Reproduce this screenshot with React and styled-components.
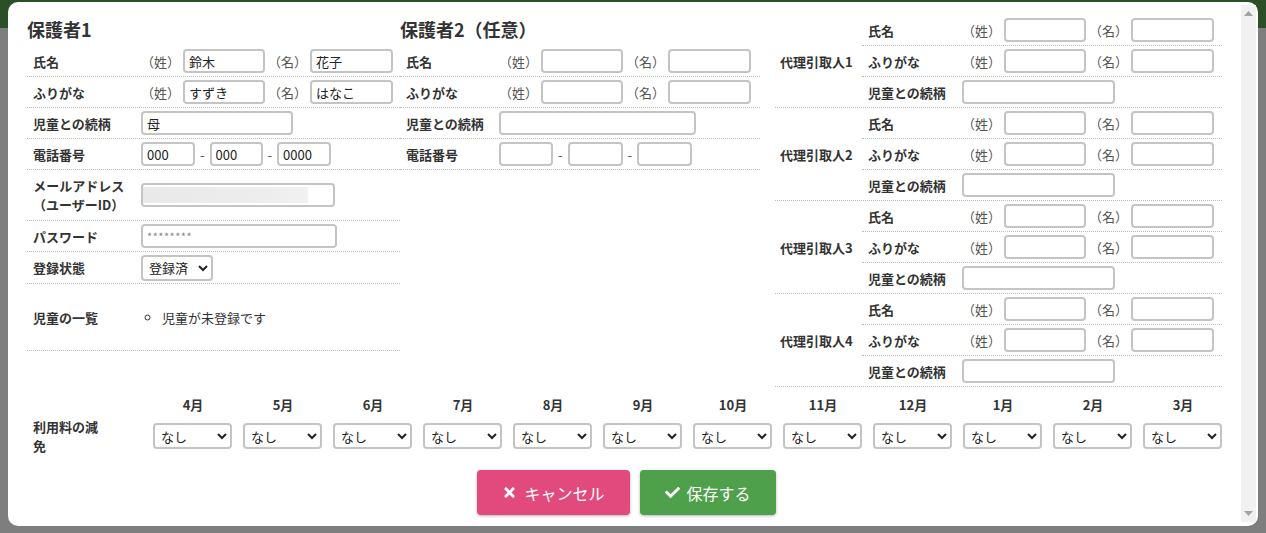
import styled, { createGlobalStyle } from "styled-components";
import { FaTimes, FaCheck } from "react-icons/fa";

const GlobalStyle = createGlobalStyle`
  html, body {
    margin: 0;
    height: 100%;
  }
  body {
    background: #7e7e7e;
    font-family: "Noto Sans CJK JP", "Noto Sans", sans-serif;
    font-size: 13px;
    color: #333;
  }
`;

const TopBar = styled.div`
  height: 28px;
  background: #2b4f27;
`;

const Modal = styled.div`
  position: fixed;
  top: 2px;
  left: 8px;
  width: 1250px;
  height: 524px;
  box-sizing: border-box;
  padding: 3px 2px 4px 0;
  background: #fff;
  border-radius: 10px;
  display: flex;
`;

const Body = styled.div`
  flex: 1;
  overflow: hidden;
  padding: 10px 15px 0 19px;
`;

const ScrollTrack = styled.div`
  width: 15px;
  flex-shrink: 0;
  background: #f1f1f1;
  display: flex;
  flex-direction: column;
  justify-content: space-between;
  align-items: center;
  padding: 6px 0;
  box-sizing: border-box;
`;

const Columns = styled.div`
  display: flex;
  align-items: flex-start;
`;

const Column = styled.div`
  width: ${({ $w }) => $w}px;
  margin-left: ${({ $ml }) => $ml || 0}px;
  flex-shrink: 0;
`;

const Heading = styled.h3`
  margin: 2px 0 5px;
  font-size: 18px;
  line-height: 24px;
  font-weight: bold;
  color: #333;
`;

const Row = styled.div`
  display: grid;
  grid-template-columns: ${({ $lw }) => $lw}px 1fr;
  align-items: center;
  min-height: ${({ $h }) => $h || 30}px;
  border-bottom: 1px dotted #bdbdbd;
`;

const Label = styled.div`
  padding-left: 6px;
  font-weight: bold;
  line-height: 19px;
  white-space: nowrap;
`;

const StackedLabel = styled(Label)`
  justify-self: start;
  text-align: center;
`;

const Value = styled.div`
  display: flex;
  align-items: center;
  gap: 3px;
`;

const Tag = styled.span`
  color: #555;
  white-space: nowrap;
`;

const Input = styled.input`
  box-sizing: border-box;
  width: ${({ $w }) => $w}px;
  height: 24px;
  border: 2px solid #c4c4c4;
  border-radius: 4px;
  padding: 0 4px;
  font: inherit;
  font-size: 13px;
  color: #222;
  background: #fff;
  outline: none;
`;

const MaskedInput = styled(Input)`
  background: linear-gradient(
      to right,
      #e9e9e9 0,
      #ececec 55%,
      #f1f1f1 calc(100% - 26px),
      #fff calc(100% - 24px)
    )
    content-box;
  padding: 2px 0;
`;

const PasswordInput = styled(Input)`
  font-size: 11px;
  letter-spacing: 0.5px;
  &::placeholder {
    color: #888;
  }
`;

const Dash = styled.span`
  color: #555;
  padding: 0 5px;
`;

const Select = styled.select`
  box-sizing: border-box;
  width: ${({ $w }) => $w}px;
  height: 26px;
  border: 2px solid #c4c4c4;
  border-radius: 4px;
  background: #fff;
  font: inherit;
  font-size: 13px;
  color: #222;
  padding: 0 2px;
`;

const ChildList = styled.ul`
  margin: 0;
  padding-left: 21px;
  list-style: circle;
  line-height: 19px;
`;

const Group = styled.div`
  display: grid;
  grid-template-columns: 87px 1fr;
  align-items: center;
  border-bottom: 1px dotted #bdbdbd;
`;

const GroupLabel = styled.div`
  grid-row: 1 / span 3;
  padding-left: 5px;
  font-weight: bold;
  white-space: nowrap;
`;

const SubRow = styled.div`
  display: grid;
  grid-template-columns: 100px 1fr;
  align-items: center;
  height: ${({ $last }) => ($last ? "30px" : "31px")};
  box-sizing: border-box;
  border-bottom: ${({ $last }) => ($last ? "none" : "1px dotted #bdbdbd")};
`;

const FeeTable = styled.div`
  margin-top: 4px;
  display: grid;
  grid-template-columns: 121px repeat(12, 90px);
  grid-template-rows: 26px 38px;
  align-items: center;
`;

const FeeLabel = styled.div`
  grid-row: 2;
  padding-left: 6px;
  font-weight: bold;
  line-height: 19px;
  width: 72px;
`;

const Month = styled.div`
  font-weight: bold;
  text-align: center;
`;

const FeeCell = styled.div`
  padding-left: 5px;
`;

const Buttons = styled.div`
  display: flex;
  justify-content: center;
  gap: 10px;
  margin-top: 15px;
`;

const Button = styled.button`
  height: 45px;
  padding: 0 25px;
  border: none;
  border-radius: 4px;
  background: ${({ $color }) => $color};
  color: #fff;
  font: inherit;
  font-size: 16px;
  display: flex;
  align-items: center;
  gap: 7px;
  box-shadow: 0 1px 3px rgba(0, 0, 0, 0.3);
  cursor: pointer;
`;

const Arrow = ({ down }) => (
  <svg width="9" height="5" viewBox="0 0 9 5">
    <path d={down ? "M0 0h9L4.5 5z" : "M0 5h9L4.5 0z"} fill="#a3a3a3" />
  </svg>
);

const NameInputs = ({ sei = "", mei = "" }) => (
  <Value>
    <Tag>（姓）</Tag>
    <Input $w={82} defaultValue={sei} />
    <Tag>（名）</Tag>
    <Input $w={83} defaultValue={mei} />
  </Value>
);

const PhoneInputs = ({ widths, values = ["", "", ""] }) => (
  <Value style={{ gap: 0 }}>
    <Input $w={widths[0]} defaultValue={values[0]} />
    <Dash>-</Dash>
    <Input $w={widths[1]} defaultValue={values[1]} />
    <Dash>-</Dash>
    <Input $w={widths[2]} defaultValue={values[2]} />
  </Value>
);

const months = ["4月", "5月", "6月", "7月", "8月", "9月", "10月", "11月", "12月", "1月", "2月", "3月"];

export default function App() {
  return (
    <>
      <GlobalStyle />
      <TopBar />
      <Modal>
        <Body>
          <Columns>
            <Column $w={373}>
              <Heading>保護者1</Heading>
              <Row $lw={114}>
                <Label>氏名</Label>
                <NameInputs sei="鈴木" mei="花子" />
              </Row>
              <Row $lw={114}>
                <Label>ふりがな</Label>
                <NameInputs sei="すずき" mei="はなこ" />
              </Row>
              <Row $lw={114}>
                <Label>児童との続柄</Label>
                <Value>
                  <Input $w={152} defaultValue="母" />
                </Value>
              </Row>
              <Row $lw={114}>
                <Label>電話番号</Label>
                <PhoneInputs widths={[54, 53, 54]} values={["000", "000", "0000"]} />
              </Row>
              <Row $lw={114} $h={50}>
                <StackedLabel>
                  メールアドレス
                  <br />
                  （ユーザーID）
                </StackedLabel>
                <Value>
                  <MaskedInput $w={194} />
                </Value>
              </Row>
              <Row $lw={114}>
                <Label>パスワード</Label>
                <Value>
                  <PasswordInput $w={196} placeholder="********" />
                </Value>
              </Row>
              <Row $lw={114} $h={31}>
                <Label>登録状態</Label>
                <Value>
                  <Select $w={72} defaultValue="done">
                    <option value="done">登録済</option>
                    <option value="temp">仮登録</option>
                  </Select>
                </Value>
              </Row>
              <Row $lw={114} $h={66}>
                <Label>児童の一覧</Label>
                <ChildList>
                  <li>児童が未登録です</li>
                </ChildList>
              </Row>
            </Column>

            <Column $w={360}>
              <Heading>保護者2（任意）</Heading>
              <Row $lw={99}>
                <Label>氏名</Label>
                <NameInputs />
              </Row>
              <Row $lw={99}>
                <Label>ふりがな</Label>
                <NameInputs />
              </Row>
              <Row $lw={99}>
                <Label>児童との続柄</Label>
                <Value>
                  <Input $w={197} />
                </Value>
              </Row>
              <Row $lw={99}>
                <Label>電話番号</Label>
                <PhoneInputs widths={[54, 55, 55]} />
              </Row>
            </Column>

            <Column $w={447} $ml={15}>
              {[1, 2, 3, 4].map((n) => (
                <Group key={n}>
                  <GroupLabel>代理引取人{n}</GroupLabel>
                  <SubRow>
                    <Label>氏名</Label>
                    <NameInputs />
                  </SubRow>
                  <SubRow>
                    <Label>ふりがな</Label>
                    <NameInputs />
                  </SubRow>
                  <SubRow $last>
                    <Label>児童との続柄</Label>
                    <Value>
                      <Input $w={153} />
                    </Value>
                  </SubRow>
                </Group>
              ))}
            </Column>
          </Columns>

          <FeeTable>
            <div />
            {months.map((m) => (
              <Month key={m}>{m}</Month>
            ))}
            <FeeLabel>利用料の減免</FeeLabel>
            {months.map((m) => (
              <FeeCell key={m}>
                <Select $w={79} defaultValue="none">
                  <option value="none">なし</option>
                  <option value="half">半額</option>
                  <option value="all">全額</option>
                </Select>
              </FeeCell>
            ))}
          </FeeTable>

          <Buttons>
            <Button $color="#e24a7d">
              <FaTimes size={15} />
              キャンセル
            </Button>
            <Button $color="#4fa04b">
              <FaCheck size={15} />
              保存する
            </Button>
          </Buttons>
        </Body>
        <ScrollTrack>
          <Arrow />
          <Arrow down />
        </ScrollTrack>
      </Modal>
    </>
  );
}
